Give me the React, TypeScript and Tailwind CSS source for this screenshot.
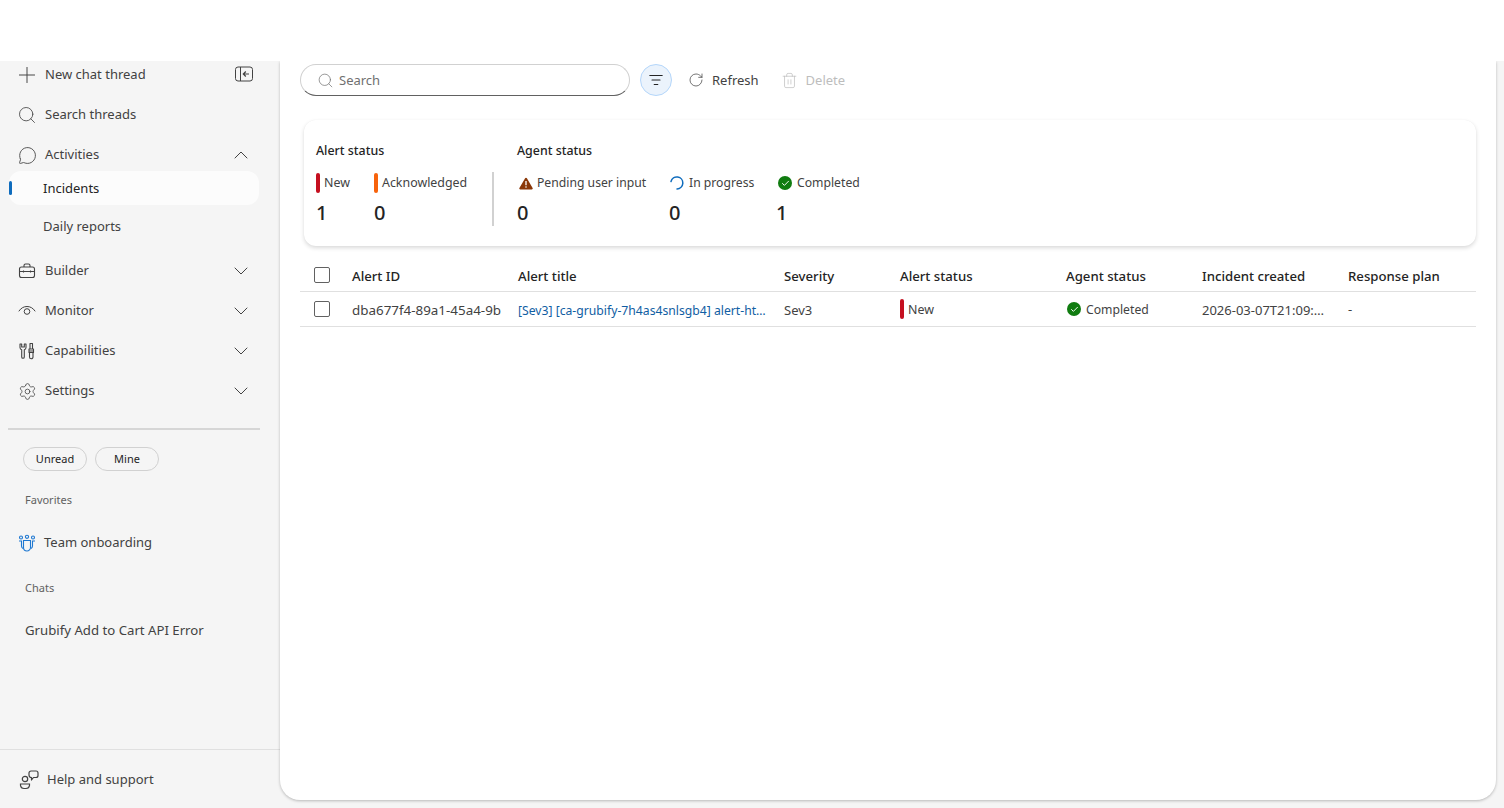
import React from 'react';
import { ChevronDown, ChevronUp, Plus, Search, MessageCircle, Settings, RotateCw, Trash2, Check } from 'lucide-react';

const navItems = ['Builder', 'Monitor', 'Capabilities', 'Settings'];

const BriefcaseIcon = () => (
  <svg width="18" height="18" viewBox="0 0 18 18" fill="none" stroke="#424242" strokeWidth="1.100">
    <rect x="1.500" y="5" width="15" height="10.500" rx="2" />
    <path d="M6 5V3.500A1.500 1.500 0 0 1 7.500 2h3A1.500 1.500 0 0 1 12 3.500V5" />
    <path d="M1.500 9.500h15M5.500 8.500v2M12.500 8.500v2" />
  </svg>
);

const EyeIcon = () => (
  <svg width="18" height="18" viewBox="0 0 18 18" fill="none" stroke="#424242" strokeWidth="1">
    <path d="M1 9C3 6 5.800 4.500 9 4.500S15 6 17 9" strokeLinecap="round" />
    <circle cx="9" cy="9.500" r="2.800" />
  </svg>
);

const ToolsIcon = () => (
  <svg width="18" height="18" viewBox="0 0 18 18" fill="none" stroke="#424242" strokeWidth="1.100" strokeLinejoin="round">
    <path d="M2 2v3.500a2.500 2.500 0 0 0 1.700 2.300V15a1.300 1.300 0 0 0 2.600 0V7.800A2.500 2.500 0 0 0 8 5.500V2L6.300 2v3H3.700V2z" />
    <path d="M12 1.500h2.500V7H12zM11 9h4.500v1.500H11zM11.500 10.500v4.500a1.700 1.700 0 0 0 3.500 0v-4.500M11 7h4.500v2H11z" />
  </svg>
);

const PanelIcon = () => (
  <svg width="18" height="16" viewBox="0 0 18 16" fill="none" stroke="#424242" strokeWidth="1" className="mb-[2px]">
    <rect x="0.500" y="1" width="17" height="14" rx="2.500" />
    <path d="M5.500 1v14" />
    <path d="M14 8H8.500M10.800 5.500L8.300 8l2.500 2.500" strokeWidth="1.200" />
  </svg>
);

const TeamIcon = () => (
  <svg width="18" height="18" viewBox="0 0 18 18" fill="none" stroke="#1f78d1" strokeWidth="1.100">
    <circle cx="9" cy="2.800" r="1.600" />
    <circle cx="3" cy="3.500" r="1.500" />
    <circle cx="15" cy="3.500" r="1.500" />
    <path d="M1 7h2.500v5a3 3 0 0 0 1.500 2.500M17 7h-2.500v5a3 3 0 0 1-1.500 2.500" />
    <path d="M5.500 6.500h7v7a3.500 3.500 0 0 1-7 0z" />
  </svg>
);

const HelpIcon = () => (
  <svg width="20" height="20" viewBox="0 0 20 20" fill="none" stroke="#424242" strokeWidth="1.200">
    <circle cx="6" cy="9" r="2.700" />
    <path d="M1.500 14h9v1.500a3.500 3.500 0 0 1-3.500 3H5a3.500 3.500 0 0 1-3.500-3z" />
    <path d="M12 1h5a2 2 0 0 1 2 2v2.500a2 2 0 0 1-2 2h-2.500L12.500 10V7.500A2.500 2.500 0 0 1 10 5V3a2 2 0 0 1 2-2z" strokeLinejoin="round" />
  </svg>
);

const FilterIcon = () => (
  <svg width="14" height="12" viewBox="0 0 14 12" fill="none" stroke="#242424" strokeWidth="1.100" strokeLinecap="round">
    <path d="M0.800 1.500h12.400M3 6h8M5.200 10.500h3.600" />
  </svg>
);

const WarnIcon = () => (
  <svg width="14" height="13" viewBox="0 0 14 13" className="shrink-0">
    <path d="M7 0.800c.4 0 .7.200.9.500l5.700 9.700c.4.700-.1 1.500-.9 1.500H1.300c-.8 0-1.300-.8-.9-1.500l5.700-9.700c.2-.3.500-.5.900-.5z" fill="#8a3707" />
    <path d="M7 4v4.200" stroke="#fff" strokeWidth="1.300" />
    <circle cx="7" cy="10" r="0.800" fill="#fff" />
  </svg>
);

const SpinnerIcon = () => (
  <svg width="14" height="14" viewBox="0 0 14 14" fill="none" stroke="#0f6cbd" strokeWidth="1.500" strokeLinecap="round" className="shrink-0">
    <path d="M1 5.500A6 6 0 1 1 7 13" />
  </svg>
);

const DoneIcon = () => (
  <span className="flex h-[14px] w-[14px] shrink-0 items-center justify-center rounded-full bg-[#107c10] text-white">
    <Check size={9} strokeWidth={2.500} />
  </span>
);

const Bar = ({ color }: { color: string }) => <span className={`h-5 w-1 shrink-0 rounded-sm ${color}`} />;

const Checkbox = () => <span className="block h-4 w-4 rounded-[2px] border border-[#616161] bg-white" />;

const Slot = ({ children }: { children: React.ReactNode }) => (
  <span className="flex h-5 w-5 shrink-0 items-center justify-center">{children}</span>
);

const App = () => {
  return (
    <div className="flex h-[808px] w-[1504px] flex-col overflow-hidden bg-white font-['Noto_Sans',sans-serif] text-[13px] text-[#424242]">
      <div className="h-[61px] shrink-0" />
      <div className="flex min-h-0 flex-1 bg-[#f5f5f5]">
        {/* sidebar */}
        <aside className="flex w-[280px] shrink-0 flex-col">
          <div className="flex h-[28px] items-center justify-between pl-[17px] pr-[27px]">
            <div className="flex items-center gap-2">
              <Slot><Plus size={26} strokeWidth={0.900} className="shrink-0" /></Slot>
              <span>New chat thread</span>
            </div>
            <PanelIcon />
          </div>
          <div className="mt-3 flex h-[28px] items-center gap-2 pl-[17px]">
            <Slot><Search size={20} strokeWidth={1} /></Slot>
            <span>Search threads</span>
          </div>
          <div className="mt-3 flex h-[28px] items-center justify-between pl-[17px] pr-[27px]">
            <div className="flex items-center gap-2">
              <Slot><MessageCircle size={19} strokeWidth={1.100} /></Slot>
              <span>Activities</span>
            </div>
            <ChevronUp size={24} strokeWidth={1} />
          </div>
          <div className="relative ml-[9px] mt-[2px] flex h-[34px] w-[250px] items-center rounded-xl bg-[#fcfcfc] pl-[34px] pt-[2px] text-[#242424]">
            <span className="absolute left-0 top-[10px] h-[14px] w-[3px] rounded-sm bg-[#0f6cbd]" />
            Incidents
          </div>
          <div className="mt-[4px] flex h-[34px] items-center pl-[43px] pt-[2px]">Daily reports</div>
          {navItems.map((label, i) => (
            <div key={label} className={`flex h-[28px] items-center justify-between pl-[17px] pr-[27px] ${i === 0 ? 'mt-[14px]' : 'mt-3'}`}>
              <div className="flex items-center gap-2">
                <Slot>
                  {label === 'Builder' && <BriefcaseIcon />}
                  {label === 'Monitor' && <EyeIcon />}
                  {label === 'Capabilities' && <ToolsIcon />}
                  {label === 'Settings' && <Settings size={19} strokeWidth={1} />}
                </Slot>
                <span>{label}</span>
              </div>
              <ChevronDown size={24} strokeWidth={1} />
            </div>
          ))}
          <div className="ml-2 mt-[23px] h-[2px] w-[252px] bg-[#d6d6d6]" />
          <div className="ml-[23px] mt-[17px] flex gap-2">
            <button className="h-6 w-16 rounded-full border border-[#d1d1d1] text-[11px] text-[#242424]">Unread</button>
            <button className="h-6 w-16 rounded-full border border-[#d1d1d1] text-[11px] text-[#242424]">Mine</button>
          </div>
          <div className="ml-[25px] mt-[21px] text-[11px] leading-[16px] text-[#616161]">Favorites</div>
          <div className="ml-[17px] mt-[25px] flex h-[20px] items-center gap-[7px]">
            <Slot><TeamIcon /></Slot>
            <span>Team onboarding</span>
          </div>
          <div className="ml-[25px] mt-[27px] text-[11px] leading-[16px] text-[#616161]">Chats</div>
          <div className="ml-[25px] mt-[24px] text-[13.2px] leading-[20px]">Grubify Add to Cart API Error</div>
          <div className="mt-auto flex h-[59px] items-center gap-[8px] border-t border-[#e0e0e0] pl-[19px] pt-[2px]">
            <HelpIcon />
            <span>Help and support</span>
          </div>
        </aside>

        {/* main panel */}
        <div className="min-w-0 flex-1 pb-2 pr-2">
          <main className="h-full rounded-b-[20px] bg-white pl-5 pr-5 pt-[3px] shadow-[0_1px_3px_rgba(0,0,0,0.25)] [clip-path:inset(0_-8px_-8px_-8px)]">
            <div className="flex h-[32px] items-center">
              <div className="flex h-[32px] w-[330px] items-center gap-[5px] rounded-full border border-[#d1d1d1] border-b-[#616161] pl-[16px] text-[#707070]">
                <Search size={17} strokeWidth={1} />
                <span className="pt-[2px]">Search</span>
              </div>
              <button className="ml-[10px] flex h-8 w-8 items-center justify-center rounded-full border border-[#b4d6fa] bg-[#ebf3fc]">
                <FilterIcon />
              </button>
              <div className="ml-[16px] flex items-center gap-[8px]">
                <RotateCw size={16} strokeWidth={1.100} />
                <span className="pt-[2px]">Refresh</span>
              </div>
              <div className="ml-[22px] flex items-center gap-[8px] text-[#bdbdbd]">
                <Trash2 size={17} strokeWidth={1} />
                <span className="pt-[2px]">Delete</span>
              </div>
            </div>

            {/* summary */}
            <section className="ml-[4px] mt-[24px] flex h-[126px] w-[1172px] rounded-xl px-[12px] pt-[21px] shadow-[0_2px_4px_rgba(0,0,0,0.15),0_0_1px_rgba(0,0,0,0.06)]">
              <div className="w-[176px]">
                <div className="text-[12.4px] font-medium leading-[20px] text-[#242424]">Alert status</div>
                <div className="mt-[12px] flex text-[12.4px]">
                  <div className="w-[58px]">
                    <div className="flex items-center gap-[4px]"><Bar color="bg-[#c50f1f]" />New</div>
                    <div className="mt-[8px] text-[20px] font-medium leading-[24px] text-[#242424]">1</div>
                  </div>
                  <div>
                    <div className="flex items-center gap-[4px]"><Bar color="bg-[#f7630c]" />Acknowledged</div>
                    <div className="mt-[8px] text-[20px] font-medium leading-[24px] text-[#242424]">0</div>
                  </div>
                </div>
              </div>
              <div className="mt-[31px] h-[54px] w-[2px] bg-[#d1d1d1]" />
              <div className="ml-[23px]">
                <div className="text-[12.4px] font-medium leading-[20px] text-[#242424]">Agent status</div>
                <div className="mt-[12px] flex text-[12.2px]">
                  <div className="w-[152px]">
                    <div className="flex h-5 items-center gap-[4px] pl-[2px]"><WarnIcon />Pending user input</div>
                    <div className="mt-[8px] text-[20px] font-medium leading-[24px] text-[#242424]">0</div>
                  </div>
                  <div className="w-[107px]">
                    <div className="flex h-5 items-center gap-[5px] pl-[1px]"><SpinnerIcon />In progress</div>
                    <div className="mt-[8px] text-[20px] font-medium leading-[24px] text-[#242424]">0</div>
                  </div>
                  <div>
                    <div className="flex h-5 items-center gap-[5px] pl-[2px]"><DoneIcon />Completed</div>
                    <div className="mt-[8px] text-[20px] font-medium leading-[24px] text-[#242424]">1</div>
                  </div>
                </div>
              </div>
            </section>

            {/* table */}
            <table className="mt-[12px] w-[1176px] table-fixed border-collapse">
              <thead>
                <tr className="h-[33px] border-b border-[#e0e0e0] text-left text-[13.2px] text-[#242424]">
                  <th className="w-[52px] pl-[14px] pt-[1px] font-medium"><Checkbox /></th>
                  <th className="w-[166px] pt-[5px] font-medium">Alert ID</th>
                  <th className="w-[266px] pt-[5px] font-medium">Alert title</th>
                  <th className="w-[116px] pt-[5px] font-medium">Severity</th>
                  <th className="w-[166px] pt-[5px] font-medium">Alert status</th>
                  <th className="w-[136px] pt-[5px] font-medium">Agent status</th>
                  <th className="w-[146px] pt-[5px] font-medium">Incident created</th>
                  <th className="pt-[5px] font-medium">Response plan</th>
                </tr>
              </thead>
              <tbody>
                <tr className="h-[35px] border-b border-[#e0e0e0]">
                  <td className="pl-[14px]"><Checkbox /></td>
                  <td className="whitespace-nowrap pt-[4px] text-[13.4px]">dba677f4-89a1-45a4-9b</td>
                  <td className="pr-4 pt-[5px]"><div className="truncate text-[12.2px] text-[#115ea3]">[Sev3] [ca-grubify-7h4as4snlsgb4] alert-http-5xx</div></td>
                  <td className="pt-[4px]">Sev3</td>
                  <td className="pt-[2px]"><div className="flex items-center gap-[4px] text-[12.4px]"><Bar color="bg-[#c50f1f]" /><span className="pt-[2px]">New</span></div></td>
                  <td className="pt-[2px]"><div className="flex items-center gap-[5px] pl-[1px] text-[12.2px]"><DoneIcon /><span className="pt-[2px]">Completed</span></div></td>
                  <td className="pr-[19px] pt-[4px]"><div className="truncate">2026-03-07T21:09:14Z</div></td>
                  <td className="pt-[2px]">-</td>
                </tr>
              </tbody>
            </table>
          </main>
        </div>
      </div>
    </div>
  );
};

export default App;
